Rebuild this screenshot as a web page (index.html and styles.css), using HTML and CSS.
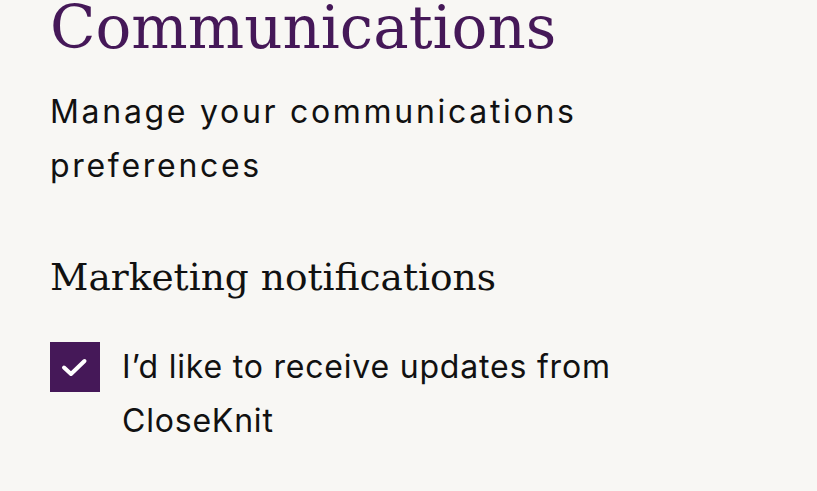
FILE: index.html
```html
<!DOCTYPE html>
<html lang="en">

<head>
    <meta charset="UTF-8">
    <meta name="viewport" content="width=device-width, initial-scale=1.0">
    <title>Communications | CloseKnit</title>
    <link rel="stylesheet" href="styles.css">
</head>

<body>
    <main class="settings-page">
        <h1 class="page-title">Communications</h1>
        <p class="page-intro">Manage your communications preferences</p>

        <!-- Marketing -->
        <section class="pref-group">
            <h2 class="group-title">Marketing notifications</h2>
            <label class="pref-option">
                <input type="checkbox" class="pref-input" checked>
                <span class="pref-box">
                    <svg viewBox="0 0 50 50" width="50" height="50" aria-hidden="true">
                        <path d="M14 25.5l7 6.5 13.5-13" fill="none" stroke="#fff" stroke-width="4" stroke-linecap="round" stroke-linejoin="round"/>
                    </svg>
                </span>
                <span class="pref-label">I’d like to receive updates from CloseKnit</span>
            </label>
        </section>
    </main>
</body>

</html>
```

FILE: styles.css
```css
/* General */
body {
    margin: 0;
    background: #f8f7f4;
    color: #111;
    font-family: 'Inter', sans-serif;
}

.settings-page {
    width: 640px;
    padding: 0 50px;
    margin-top: -12px;
}

/* Titles */
.page-title {
    font-family: 'DejaVu Serif', serif;
    font-weight: normal;
    font-size: 59.5px;
    line-height: 80px;
    color: #451858;
    margin: 0;
}

.page-intro {
    width: 580px;
    font-size: 32px;
    line-height: 54px;
    letter-spacing: 2.7px;
    margin: 17px 0 0;
}

.group-title {
    font-family: 'DejaVu Serif', serif;
    font-weight: normal;
    font-size: 37.5px;
    line-height: 50px;
    margin: 59px 0 0;
}

/* Checkbox row */
.pref-option {
    display: flex;
    align-items: flex-start;
    gap: 22px;
    margin-top: 40px;
    cursor: pointer;
}

.pref-input {
    display: none;
}

.pref-box {
    flex: none;
    width: 50px;
    height: 50px;
    background: #451858;
}

.pref-box svg {
    display: block;
}

.pref-label {
    flex: none;
    width: 520px;
    font-size: 32px;
    line-height: 54px;
    letter-spacing: 0.8px;
    margin-top: -2px;
}
```
